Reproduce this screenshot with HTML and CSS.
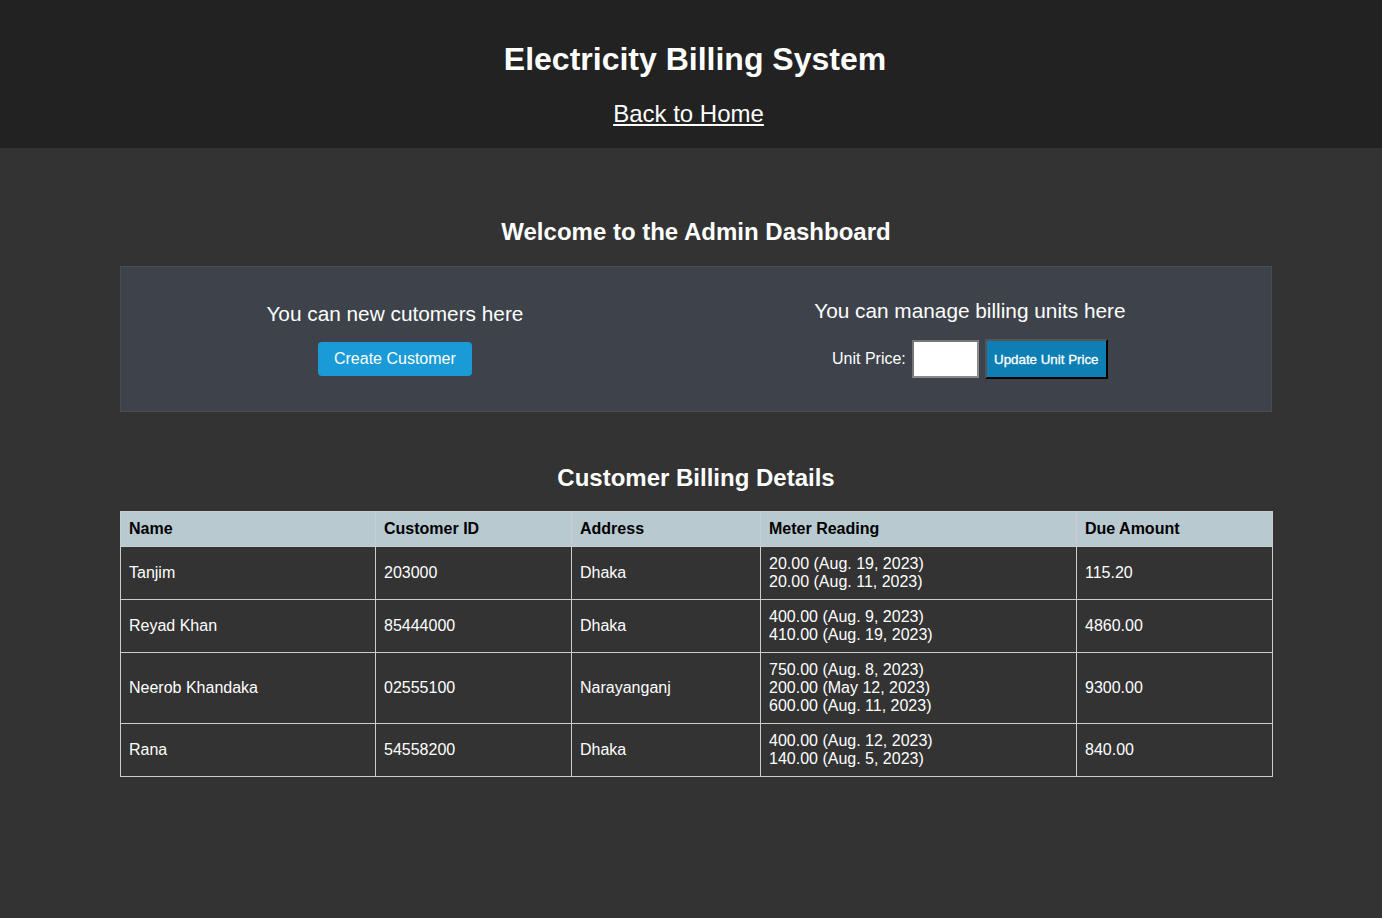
FILE: index.html
```html
<!DOCTYPE html>
<html lang="en">
<head>
<meta charset="utf-8">
<title>Electricity Billing System</title>
<link rel="stylesheet" href="styles.css">
</head>
<body>
<header class="site-header">
  <h1 class="site-title">Electricity Billing System</h1>
  <a class="home-link" href="#">Back to Home</a>
</header>
<main class="main">
  <div class="container">
    <h2 class="section-title">Welcome to the Admin Dashboard</h2>
    <div class="panel">
      <div class="panel-item">
        <h3 class="panel-heading">You can new cutomers here</h3>
        <a class="btn-create" href="#">Create Customer</a>
      </div>
      <div class="panel-item">
        <h3 class="panel-heading">You can manage billing units here</h3>
        <form class="price-form">
          <label class="price-label" for="price">Unit Price:</label>
          <input class="price-input" id="price" type="text">
          <button class="btn-update" type="button">Update Unit Price</button>
        </form>
      </div>
    </div>
    <h2 class="section-title table-title">Customer Billing Details</h2>
    <table class="billing">
      <thead>
        <tr>
          <th class="c-name">Name</th>
          <th class="c-id">Customer ID</th>
          <th class="c-addr">Address</th>
          <th class="c-meter">Meter Reading</th>
          <th class="c-due">Due Amount</th>
        </tr>
      </thead>
      <tbody>
        <tr>
          <td>Tanjim</td>
          <td>203000</td>
          <td>Dhaka</td>
          <td>20.00 (Aug. 19, 2023)<br>20.00 (Aug. 11, 2023)</td>
          <td>115.20</td>
        </tr>
        <tr>
          <td>Reyad Khan</td>
          <td>85444000</td>
          <td>Dhaka</td>
          <td>400.00 (Aug. 9, 2023)<br>410.00 (Aug. 19, 2023)</td>
          <td>4860.00</td>
        </tr>
        <tr>
          <td>Neerob Khandaka</td>
          <td>02555100</td>
          <td>Narayanganj</td>
          <td>750.00 (Aug. 8, 2023)<br>200.00 (May 12, 2023)<br>600.00 (Aug. 11, 2023)</td>
          <td>9300.00</td>
        </tr>
        <tr>
          <td>Rana</td>
          <td>54558200</td>
          <td>Dhaka</td>
          <td>400.00 (Aug. 12, 2023)<br>140.00 (Aug. 5, 2023)</td>
          <td>840.00</td>
        </tr>
      </tbody>
    </table>
  </div>
</main>
</body>
</html>
```

FILE: styles.css
```css
* { box-sizing: border-box; }

html, body {
  margin: 0;
  padding: 0;
}

body {
  background: #333333;
  color: #ffffff;
  font-family: "Liberation Sans", Arial, sans-serif;
  font-size: 16px;
  min-height: 918px;
}

.site-header {
  background: #222222;
  padding: 20px 0;
  text-align: center;
}

.site-title {
  margin: 21.44px 0 22px;
  font-size: 32px;
  font-weight: bold;
  line-height: 37px;
  padding-left: 8px;
}

.home-link {
  color: #ffffff;
  font-size: 24px;
  line-height: 28px;
  text-decoration: underline;
  display: inline-block;
  margin-right: 5px;
}

.main {
  padding: 50px 110px 50px 120px;
}

.section-title {
  font-size: 24px;
  font-weight: bold;
  line-height: 28px;
  text-align: center;
  margin: 20px 0 20px;
}

.table-title {
  margin-top: 52px;
  margin-bottom: 19px;
}

.panel {
  background: #3e434b;
  border: 1px solid #474c55;
  display: flex;
  justify-content: space-around;
  align-items: center;
  padding: 32px 0;
}

.panel-item {
  display: flex;
  flex-direction: column;
  align-items: center;
}

.panel-heading {
  margin: 0 0 16px;
  font-size: 20.8px;
  font-weight: normal;
  line-height: 24px;
}

.btn-create {
  background: #1a9ad6;
  color: #ffffff;
  text-decoration: none;
  font-size: 16px;
  line-height: 18px;
  padding: 8px 16px;
  border-radius: 4px;
}

.price-form {
  display: flex;
  align-items: center;
  margin: 0;
}

.price-label {
  font-size: 16px;
  margin-right: 6px;
}

.price-input {
  width: 67px;
  height: 38px;
  background: #ffffff;
  border: 2px solid;
  border-color: #767676 #8a8a8a #8a8a8a #767676;
  margin: 0 6px 0 0;
  padding: 1px 2px;
}

.btn-update {
  background: #0e7fb5;
  color: #ffffff;
  font-family: "Liberation Sans", Arial, sans-serif;
  font-size: 13.333px;
  height: 40px;
  width: 123px;
  padding: 0 6px;
  border: 2px solid;
  border-color: #555555 #000000 #000000 #555555;
  -webkit-text-stroke: 0.3px #ffffff;
}

.billing {
  width: 100%;
  border-collapse: collapse;
  table-layout: fixed;
}

.billing th,
.billing td {
  border: 1px solid #cccccc;
  padding: 8px;
  text-align: left;
  vertical-align: middle;
  font-size: 16px;
  line-height: 18px;
}

.billing th {
  background: #b8c9cf;
  color: #000000;
  font-weight: bold;
}

.billing td {
  color: #ffffff;
}

.c-name { width: 255px; }
.c-id { width: 196px; }
.c-addr { width: 189px; }
.c-meter { width: 316px; }
.c-due { width: 196px; }
```
